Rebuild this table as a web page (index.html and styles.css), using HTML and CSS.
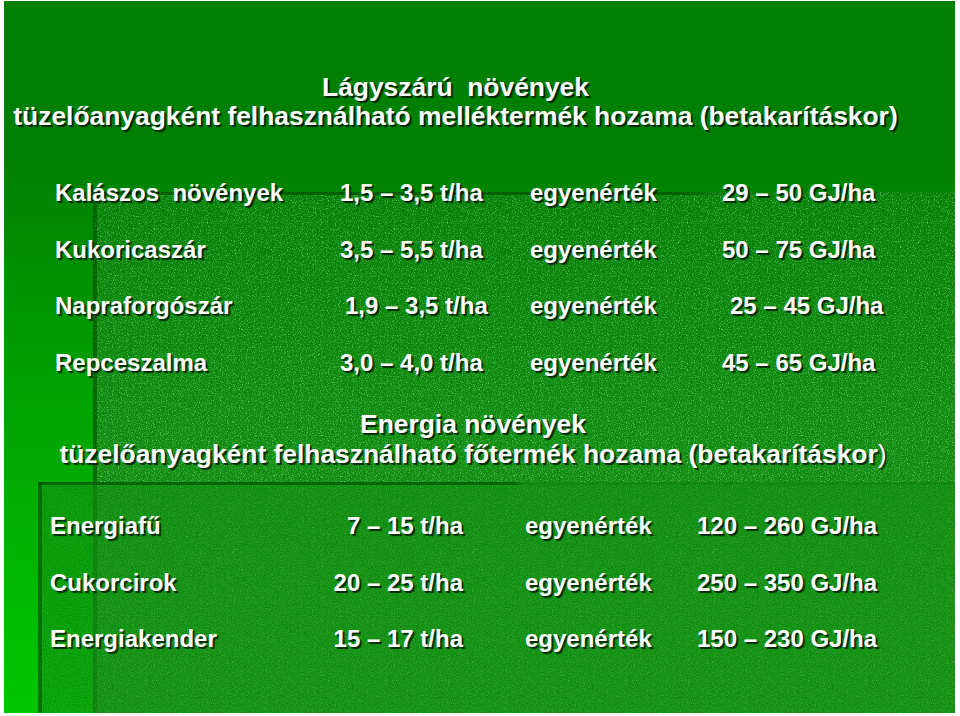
FILE: index.html
```html
<!DOCTYPE html>
<html lang="hu">
<head>
<meta charset="utf-8">
<title>Lágyszárú növények</title>
<link rel="stylesheet" href="styles.css">
</head>
<body>
<div class="slide">
  <div class="panel panel-a"></div>
  <div class="panel panel-b"></div>

  <h1 class="title title-a">Lágyszárú&nbsp; növények<br>tüzelőanyagként felhasználható melléktermék hozama (betakarításkor)</h1>

  <div class="table table-a">
    <div class="c1">Kalászos&nbsp; növények</div><div class="c2">1,5 – 3,5 t/ha</div><div class="c3">egyenérték</div><div class="c4">29 – 50 GJ/ha</div>
    <div class="c1">Kukoricaszár</div><div class="c2">3,5 – 5,5 t/ha</div><div class="c3">egyenérték</div><div class="c4">50 – 75 GJ/ha</div>
    <div class="c1">Napraforgószár</div><div class="c2 shift">1,9 – 3,5 t/ha</div><div class="c3">egyenérték</div><div class="c4 shift2">25 – 45 GJ/ha</div>
    <div class="c1">Repceszalma</div><div class="c2">3,0 – 4,0 t/ha</div><div class="c3">egyenérték</div><div class="c4">45 – 65 GJ/ha</div>
  </div>

  <h2 class="title title-b">Energia növények<br>tüzelőanyagként felhasználható főtermék hozama (betakarításkor<span class="thin">)</span></h2>

  <div class="table table-b">
    <div class="c1">Energiafű</div><div class="c2">7 – 15 t/ha</div><div class="c3">egyenérték</div><div class="c4">120 – 260 GJ/ha</div>
    <div class="c1">Cukorcirok</div><div class="c2">20 – 25 t/ha</div><div class="c3">egyenérték</div><div class="c4">250 – 350 GJ/ha</div>
    <div class="c1">Energiakender</div><div class="c2">15 – 17 t/ha</div><div class="c3">egyenérték</div><div class="c4">150 – 230 GJ/ha</div>
  </div>
</div>
</body>
</html>
```
FILE: styles.css
```css
html, body {
  margin: 0;
  padding: 0;
  background: #ffffff;
}

body {
  width: 960px;
  height: 716px;
  overflow: hidden;
}

.slide {
  position: relative;
  margin: 1px 5px 0 4px;
  width: 951px;
  height: 712px;
  overflow: hidden;
  background: linear-gradient(to bottom, #008000 0%, #008000 22%, #00a200 55%, #00c600 100%);
  font-family: "Liberation Sans", Arial, "DejaVu Sans", sans-serif;
  font-weight: bold;
  color: #ffffff;
  text-shadow: 2px 2px 1px rgba(0, 0, 0, 0.72);
}

/* decorative slide shapes */
.panel {
  position: absolute;
  right: 0;
  bottom: 0;
  z-index: 0;
}

.panel::before {
  content: "";
  position: absolute;
  left: 0;
  top: 0;
  right: 0;
  height: 3px;
}

.panel-a {
  left: 89px;
  top: 191px;
  border-left: 4px solid rgba(0, 70, 0, 0.55);
  background-color: transparent;
  background-image:
    url("data:image/svg+xml;utf8,<svg xmlns='http://www.w3.org/2000/svg' width='240' height='240'><filter id='n'><feTurbulence type='fractalNoise' baseFrequency='0.9' numOctaves='2' seed='3' stitchTiles='stitch'/><feColorMatrix values='0 0 0 0 0  0 0 0 0 0.22  0 0 0 0 0  2 0 0 0 -0.8'/></filter><rect width='100%' height='100%' filter='url(%23n)'/></svg>"),
    url("data:image/svg+xml;utf8,<svg xmlns='http://www.w3.org/2000/svg' width='240' height='240'><filter id='m'><feTurbulence type='fractalNoise' baseFrequency='0.85' numOctaves='2' seed='9' stitchTiles='stitch'/><feColorMatrix values='0 0 0 0 0.5  0 0 0 0 0.9  0 0 0 0 0.5  1.6 0 0 0 -0.78'/></filter><rect width='100%' height='100%' filter='url(%23m)'/></svg>"),
    linear-gradient(to bottom, #078107 0%, #118c11 35%, #1b971b 70%, #209d20 100%);
}

.panel-a::before {
  left: -4px;
  background: linear-gradient(to right, rgba(0, 80, 0, 0.75) 0%, rgba(0, 80, 0, 0.75) 68%, rgba(0, 80, 0, 0.1) 73%, rgba(0, 80, 0, 0.05) 100%);
}

.panel-b {
  left: 34px;
  top: 481px;
  border-left: 4px solid rgba(0, 80, 0, 0.6);
  background-color: rgba(28, 150, 28, 0.55);
  background-image:
    url("data:image/svg+xml;utf8,<svg xmlns='http://www.w3.org/2000/svg' width='240' height='240'><filter id='k'><feTurbulence type='fractalNoise' baseFrequency='0.9' numOctaves='2' seed='5' stitchTiles='stitch'/><feColorMatrix values='0 0 0 0 0  0 0 0 0 0.22  0 0 0 0 0  1.8 0 0 0 -0.75'/></filter><rect width='100%' height='100%' filter='url(%23k)'/></svg>");
}

.panel-b::before {
  left: -4px;
  background: linear-gradient(to right, rgba(0, 80, 0, 0.7) 0%, rgba(0, 80, 0, 0.7) 52%, rgba(0, 80, 0, 0.12) 53%, rgba(0, 80, 0, 0.12) 100%);
}

/* content */
.title {
  position: relative;
  z-index: 1;
  margin: 0;
  font-size: 26.4px;
  font-weight: bold;
  text-align: center;
  white-space: nowrap;
}

.title-a {
  padding: 72px 48px 0 0;
  line-height: 29px;
}

.title-b {
  margin-top: 17.5px;
  padding-right: 13px;
  line-height: 30px;
}

.thin {
  font-weight: normal;
}

.table {
  position: relative;
  z-index: 1;
  display: grid;
  font-size: 24px;
  line-height: 56.5px;
  white-space: nowrap;
}

.table-a {
  margin-top: 34px;
  padding-left: 51px;
  grid-template-columns: 285px 190px 192px 1fr;
}

.table-a .shift {
  padding-left: 5px;
}

.table-a .shift2 {
  padding-left: 8px;
}

.table-b {
  margin-top: 29.5px;
  padding-left: 46px;
  grid-template-columns: 200px 213px 234px 1fr;
}

.table-b .c2 {
  text-align: right;
}

.table-b .c3 {
  padding-left: 62px;
}
```
